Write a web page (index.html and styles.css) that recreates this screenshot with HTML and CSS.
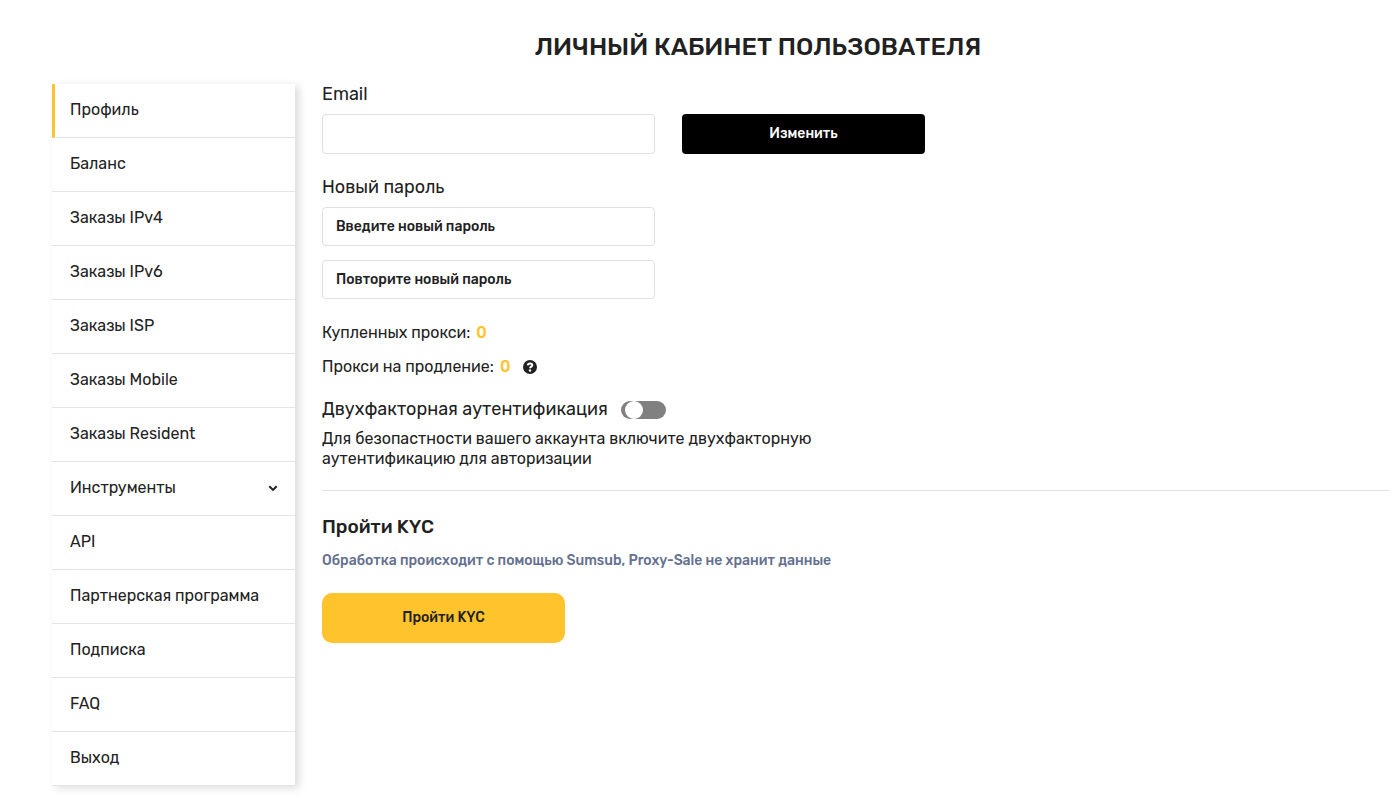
FILE: index.html
```html
<!DOCTYPE html>
<html lang="ru">
<head>
    <meta charset="UTF-8">
    <meta name="viewport" content="width=device-width">
    <title>Личный кабинет</title>
    <link rel="stylesheet" href="styles.css">
</head>
<body>
<div class="cabinet">
    <h1 class="cabinet-title">Личный кабинет пользователя</h1>
    <div class="cabinet-row">
        <nav class="menu">
            <a class="active" href="#">Профиль</a>
            <a href="#">Баланс</a>
            <a href="#">Заказы IPv4</a>
            <a href="#">Заказы IPv6</a>
            <a href="#">Заказы ISP</a>
            <a href="#">Заказы Mobile</a>
            <a href="#">Заказы Resident</a>
            <a href="#">Инструменты
                <svg class="arrow" viewBox="0 0 10 7" aria-hidden="true"><path d="M1.3 1.3 5 4.9 8.7 1.3"/></svg>
            </a>
            <a href="#">API</a>
            <a href="#">Партнерская программа</a>
            <a href="#">Подписка</a>
            <a href="#">FAQ</a>
            <a href="#">Выход</a>
        </nav>
        <main class="content">
            <form class="profile">
                <label class="label" for="email">Email</label>
                <div class="line">
                    <input class="field field-email" type="email" id="email">
                    <button class="btn btn-black" type="button">Изменить</button>
                </div>
                <label class="label" for="password">Новый пароль</label>
                <input class="field" type="password" id="password" placeholder="Введите новый пароль">
                <input class="field" type="password" id="password2" placeholder="Повторите новый пароль" aria-label="Повторите новый пароль">
            </form>
            <div class="stats">
                <p>Купленных прокси: <b>0</b></p>
                <p>Прокси на продление: <b>0</b>
                    <svg class="help" viewBox="0 0 14 14" aria-hidden="true">
                        <circle cx="7" cy="7" r="7"/>
                        <path d="M4.7 5.3C4.9 4 5.8 3.5 7.1 3.5c1.3 0 2.2.7 2.2 1.7 0 1.5-2.2 1.4-2.2 3"/>
                        <circle class="dot" cx="7" cy="10.5" r="1.2"/>
                    </svg>
                </p>
            </div>
            <div class="twofa">
                <div class="twofa-head">
                    <label for="twofa">Двухфакторная аутентификация</label>
                    <input class="switch" type="checkbox" id="twofa">
                </div>
                <p>Для безопастности вашего аккаунта включите двухфакторную аутентификацию для авторизации</p>
            </div>
            <section class="kyc">
                <h2>Пройти KYC</h2>
                <p>Обработка происходит с помощью Sumsub, Proxy-Sale не хранит данные</p>
                <button class="btn btn-yellow" type="button">Пройти KYC</button>
            </section>
        </main>
    </div>
</div>
</body>
</html>
```
FILE: styles.css
```css
*{
    margin: 0;
    padding: 0;
    box-sizing: border-box;
}
body{
    background-color: #fff;
    color: #212121;
    font-family: Rubik, Roboto, sans-serif;
    font-size: 16px;
    line-height: 20px;
}
input,button{
    font-family: inherit;
}
.cabinet{
    padding: 32px 0 12px 52px;
}
.cabinet-title{
    margin: 0 0 22px 75px;
    font-size: 25px;
    line-height: 30px;
    font-weight: 500;
    text-align: center;
    text-transform: uppercase;
}
.cabinet-row{
    display: flex;
    align-items: flex-start;
    gap: 27px;
}
/* боковое меню */
.menu{
    flex: 0 0 243px;
    background-color: #fff;
    box-shadow: 4px 2px 8px rgba(0,0,0,0.14);
}
.menu a{
    display: flex;
    justify-content: space-between;
    align-items: center;
    height: 54px;
    padding: 0 17px 1px 18px;
    border-bottom: 1px solid #e4e4e4;
    color: inherit;
    text-decoration: none;
}
.menu a.active{
    padding-left: 15px;
    border-left: 3px solid #ffc32b;
}
.arrow{
    width: 10px;
    height: 7px;
    fill: none;
    stroke: #212121;
    stroke-width: 2;
}
.content{
    flex: 1;
}
/* форма профиля */
.profile{
    display: flex;
    flex-direction: column;
    align-items: flex-start;
}
.label{
    margin-bottom: 10px;
    font-size: 18px;
}
.line{
    display: flex;
    gap: 27px;
    margin-bottom: 23px;
}
.field{
    width: 333px;
    height: 39px;
    margin-bottom: 14px;
    padding: 0 13px;
    border: 1px solid #e0e0e0;
    border-radius: 4px;
    color: #212121;
    font-size: 14px;
    font-weight: 500;
}
.field-email{
    height: 40px;
    margin-bottom: 0;
}
.field::placeholder{
    color: #212121;
    opacity: 1;
}
.btn{
    width: 243px;
    padding-bottom: 2px;
    border: none;
    font-size: 14px;
    font-weight: 500;
    cursor: pointer;
}
.btn-black{
    height: 40px;
    border-radius: 4px;
    background-color: #000;
    color: #fff;
}
.btn-yellow{
    height: 50px;
    border-radius: 10px;
    background-color: #ffc32b;
    color: #212121;
}
.stats{
    margin-top: 10px;
}
.stats p{
    display: flex;
    align-items: center;
    gap: 6px;
    margin-bottom: 14px;
}
.stats b{
    color: #ffc32b;
    font-weight: 500;
}
.help{
    width: 14px;
    height: 14px;
    margin-left: 7px;
    fill: #212121;
}
.help path{
    fill: none;
    stroke: #fff;
    stroke-width: 2;
}
.help .dot{
    fill: #fff;
}
/* двухфакторная аутентификация */
.twofa{
    padding-bottom: 21px;
    border-bottom: 1px solid #e0e0e0;
}
.twofa-head{
    display: flex;
    align-items: flex-end;
    gap: 13px;
    margin: 22px 0 10px;
    font-size: 18px;
}
.twofa p{
    max-width: 530px;
}
.switch{
    width: 45px;
    height: 18px;
    padding-left: 4px;
    border-radius: 9px;
    background-color: #808080;
    appearance: none;
    cursor: pointer;
}
.switch::before{
    content: "";
    display: block;
    width: 18px;
    height: 18px;
    border-radius: 50%;
    background-color: #fff;
}
.switch:checked{
    padding-left: 23px;
    background-color: #ffc32b;
}
.kyc{
    padding-top: 24px;
}
.kyc h2{
    margin-bottom: 12px;
    font-size: 19px;
    line-height: 24px;
    font-weight: 500;
}
.kyc p{
    margin-bottom: 22px;
    color: #64708f;
    font-size: 14px;
    font-weight: 500;
}
```
